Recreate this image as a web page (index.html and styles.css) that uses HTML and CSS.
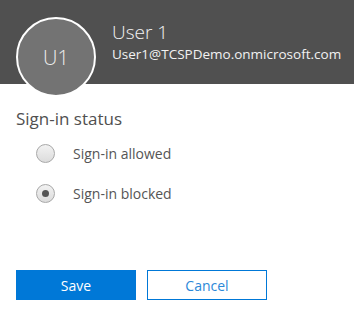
FILE: index.html
```html
<!DOCTYPE html>
<html lang="en">
  <head>
    <meta charset="UTF-8" />
    <title>User 1</title>
    <link rel="stylesheet" href="styles.css">
  </head>
  <body>
    <div class="header">
      <div class="avatar">U1</div>
      <div class="user-text">
        <div class="user-name">User 1</div>
        <div class="user-mail">User1@TCSPDemo.onmicrosoft.com</div>
      </div>
    </div>
    <div class="panel">
      <h2>Sign-in status</h2>
      <label class="radio-row">
        <span class="radio"></span>
        <span>Sign-in allowed</span>
      </label>
      <label class="radio-row">
        <span class="radio checked"></span>
        <span>Sign-in blocked</span>
      </label>
      <div class="actions">
        <button class="btn btn-primary">Save</button>
        <button class="btn btn-default">Cancel</button>
      </div>
    </div>
  </body>
</html>
```

FILE: styles.css
```css
body {
  font-family: 'Open Sans', 'Noto Sans', sans-serif;
  margin: 0;
  padding: 0;
  background-color: #fff;
  color: #555;
}

.header {
  height: 84px;
  background-color: #505050;
  display: flex;
  padding-left: 16px;
}

.avatar {
  width: 76px;
  height: 76px;
  margin-top: 17px;
  border: 2px solid #fff;
  border-radius: 50%;
  background-color: #737373;
  color: #eee;
  font-size: 20px;
  font-weight: 300;
  display: flex;
  align-items: center;
  justify-content: center;
  flex-shrink: 0;
}

.user-text {
  margin-left: 16px;
  padding-top: 19px;
  color: #f2f2f2;
}

.user-name {
  font-size: 19px;
  line-height: 26px;
  font-weight: 300;
}

.user-mail {
  font-size: 13.5px;
  line-height: 18px;
}

.panel {
  padding: 23px 16px 0;
}

h2 {
  font-size: 17px;
  font-weight: 400;
  line-height: 24px;
  margin: 0 0 12px;
  color: #505050;
}

.radio-row {
  display: flex;
  align-items: center;
  gap: 18px;
  padding-left: 20px;
  height: 20px;
  margin-bottom: 20px;
  font-size: 14px;
  color: #555;
}

.radio {
  width: 17px;
  height: 17px;
  border: 1px solid #a8a8a8;
  border-radius: 50%;
  background: linear-gradient(#f2f2f2, #dcdcdc);
  position: relative;
}

.radio.checked::after {
  content: '';
  position: absolute;
  left: 5px;
  top: 5px;
  width: 7px;
  height: 7px;
  border-radius: 50%;
  background-color: #555;
}

.actions {
  display: flex;
  gap: 11px;
  margin-top: 67px;
}

.btn {
  width: 120px;
  height: 30px;
  font-family: inherit;
  font-size: 14px;
  border: 1px solid #0078d7;
  padding: 0;
}

.btn-primary {
  background-color: #0078d7;
  color: #fff;
}

.btn-default {
  background-color: #fff;
  color: #2b88d8;
}
```
